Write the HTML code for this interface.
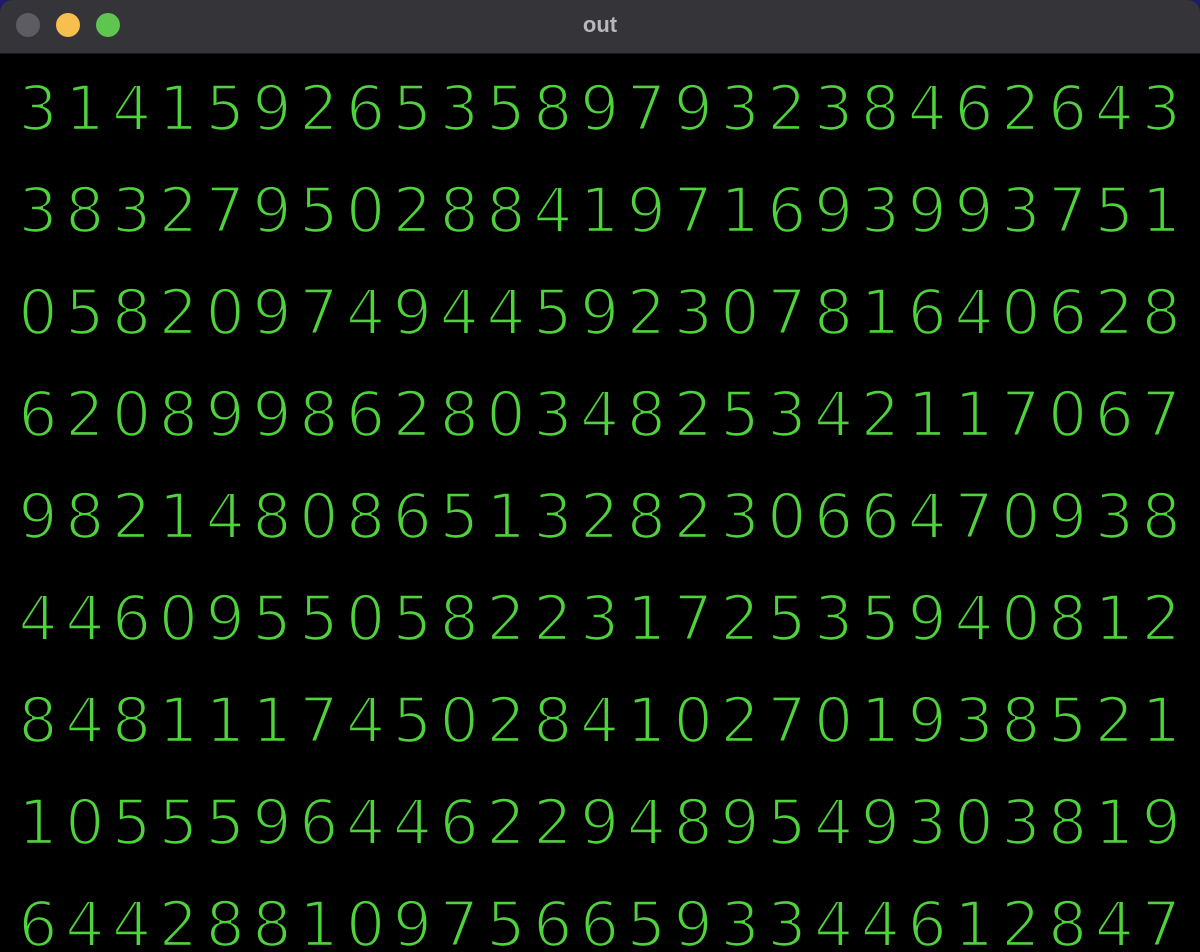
<!DOCTYPE html>
<html><head><meta charset="utf-8"><style>
html,body{margin:0;padding:0;background:#1e1b6e;width:1200px;height:952px;overflow:hidden}
.win{position:absolute;left:0;top:0;width:1200px;height:952px;border-radius:12px 12px 0 0;overflow:hidden;background:#000}
.bar{position:absolute;left:0;top:0;width:1200px;height:53px;background:#353439;border-bottom:1px solid #1a1a1c}
.dot{position:absolute;top:13px;width:24px;height:24px;border-radius:50%}
.t{position:absolute;top:0;width:1200px;text-align:center;color:#b8b7bc;font:bold 22px "Liberation Sans",sans-serif;line-height:50px}
svg{position:absolute;left:0;top:0}
</style></head><body><div class="win">
<div class="bar"><div class="dot" style="left:16px;background:#5d5c62"></div><div class="dot" style="left:56px;background:#f6bf4f"></div><div class="dot" style="left:96px;background:#5ec550"></div><div class="t">out</div></div>
<svg id="s" width="1200" height="952" font-family="DejaVu Sans, Liberation Sans, sans-serif" font-size="62" fill="#4fd33c" stroke="#000" stroke-width="2.6" text-anchor="middle"></svg>
</div>
<script>
var rows=["3141592653589793238462643","3832795028841971693993751","0582097494459230781640628","6208998628034825342117067","9821480865132823066470938","4460955058223172535940812","8481117450284102701938521","1055596446229489549303819","6442881097566593344612847"];
var s=document.getElementById('s'),h='';
rows.forEach(function(r,ri){for(var i=0;i<r.length;i++){h+='<text x="'+(38+46.8*i)+'" y="'+(130+102*ri)+'">'+r[i]+'</text>';}});
s.innerHTML=h;
</script>
</body></html>
